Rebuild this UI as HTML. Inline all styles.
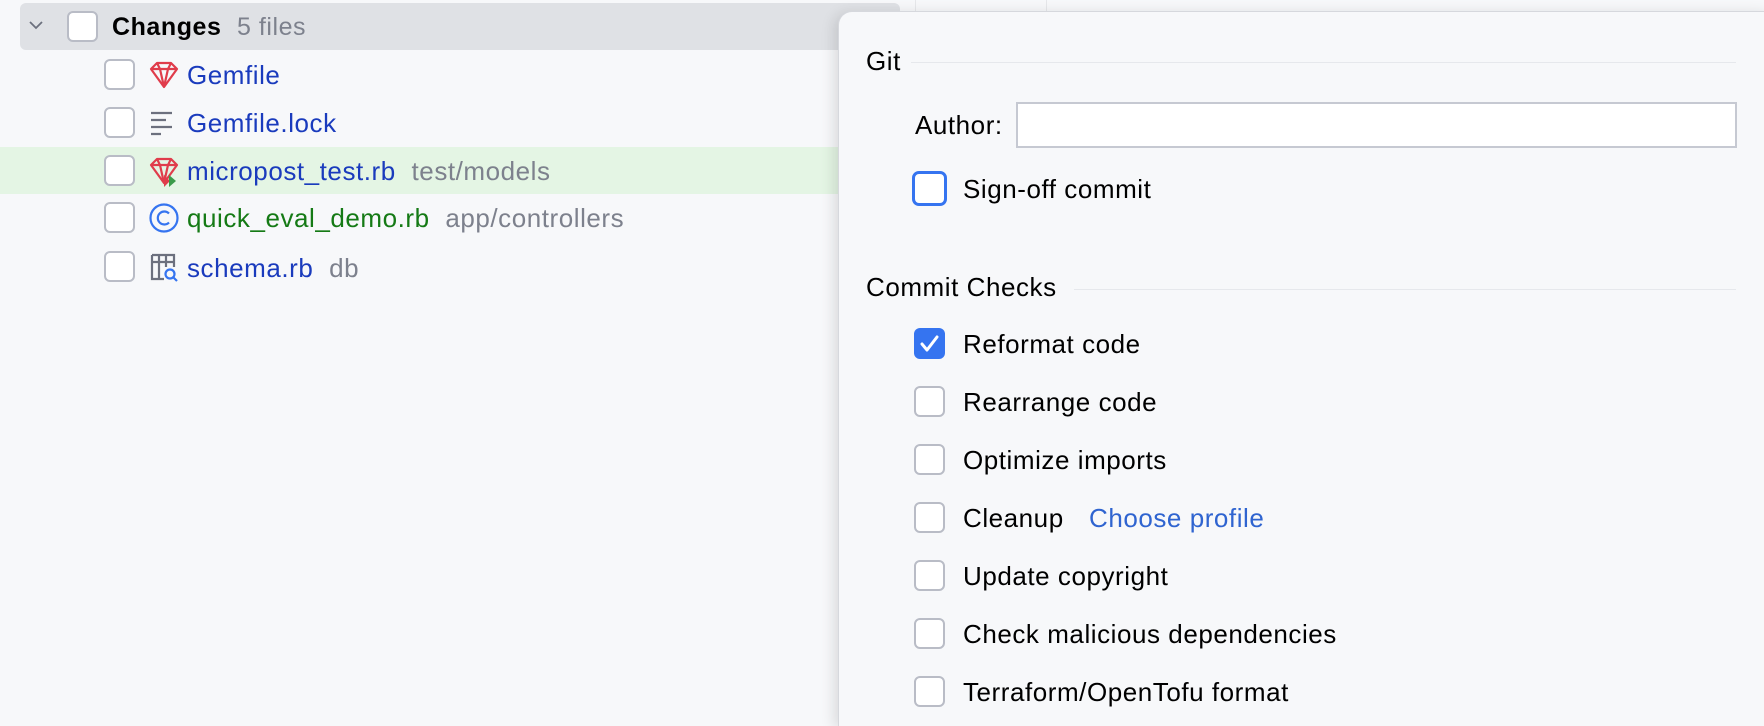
<!DOCTYPE html>
<html><head><meta charset="utf-8"><style>
*{margin:0;padding:0;box-sizing:border-box}
html,body{overflow:hidden;height:726px}
body{width:1764px;background:#f7f8fa;font-family:"Liberation Sans",sans-serif;font-size:26px;letter-spacing:0.55px;color:#000;position:relative}
.abs{position:absolute}
.cb{position:absolute;width:31px;height:31px;border:2px solid #b9bcc6;border-radius:6px;background:#fff}
.t{position:absolute;white-space:nowrap;line-height:30px}
.blue{color:#1a3bbd}.gray{color:#7d818d;margin-left:8px}.green{color:#157a15}
</style></head><body>
<div class="abs" style="left:915px;top:0;width:1px;height:14px;background:#e6e7ea"></div>
<div class="abs" style="left:1046px;top:0;width:1px;height:14px;background:#e6e7ea"></div>
<div class="abs" style="left:20px;top:3px;width:880px;height:47px;background:#dfe1e5;border-radius:6px"></div>
<svg class="abs" style="left:28px;top:18px" width="16" height="14"><path d="M2 4 L8 10 L14 4" fill="none" stroke="#6c707e" stroke-width="1.8"/></svg>
<div class="cb" style="left:67px;top:11px"></div>
<div class="t" style="left:112px;top:12px;font-weight:bold;font-size:25px">Changes <span class="gray" style="font-weight:normal">5 files</span></div>

<div class="cb" style="left:104px;top:59px"></div>
<svg class="abs" style="left:147px;top:60px" width="34" height="30"><path d="M4 9 L10 3 H24 L30 9 L17 27 Z M4 9 H30 M10 3 L13 9 L17 27 L21 9 L24 3" fill="none" stroke="#e03c4b" stroke-width="2.2" stroke-linejoin="round"/></svg>
<div class="t blue" style="left:187px;top:60px">Gemfile</div>

<div class="cb" style="left:104px;top:107px"></div>
<svg class="abs" style="left:150px;top:110px" width="26" height="26"><path d="M1 3H22M1 10H16M1 17H22M1 24H11" stroke="#6c707e" stroke-width="2.2"/></svg>
<div class="t blue" style="left:187px;top:108px">Gemfile.lock</div>

<div class="abs" style="left:0;top:147px;width:900px;height:47px;background:#e4f5e4"></div>
<div class="cb" style="left:104px;top:155px"></div>
<svg class="abs" style="left:147px;top:156px" width="34" height="32"><path d="M4 9 L10 3 H24 L30 9 L17 27 Z M4 9 H30 M10 3 L13 9 L17 27 L21 9 L24 3" fill="none" stroke="#e03c4b" stroke-width="2.2" stroke-linejoin="round"/><path d="M17 19 L17 31 L23 25 Z" fill="#e03c4b"/><path d="M22 19 L22 31 L29 25 Z" fill="#3a9b4a"/></svg>
<div class="t blue" style="left:187px;top:156px">micropost_test.rb <span class="gray">test/models</span></div>

<div class="cb" style="left:104px;top:202px"></div>
<svg class="abs" style="left:148px;top:202px" width="32" height="32"><circle cx="16" cy="16" r="13.5" fill="none" stroke="#3574f0" stroke-width="2.2"/><path d="M21 11.5 A6.5 6.5 0 1 0 21 20.5" fill="none" stroke="#3574f0" stroke-width="2.2"/></svg>
<div class="t green" style="left:187px;top:203px">quick_eval_demo.rb <span class="gray">app/controllers</span></div>

<div class="cb" style="left:104px;top:251px"></div>
<svg class="abs" style="left:150px;top:253px" width="32" height="30"><path d="M2 2H24V14M2 2V26H14M2 9H24M9 2V26M16 2V14" fill="none" stroke="#6c707e" stroke-width="2.2"/><circle cx="20" cy="21" r="4.5" fill="none" stroke="#3574f0" stroke-width="2.2"/><path d="M23 24L27 28" stroke="#3574f0" stroke-width="2.2"/></svg>
<div class="t blue" style="left:187px;top:253px">schema.rb <span class="gray">db</span></div>

<div class="abs" style="left:838px;top:11px;width:940px;height:715px;background:#f7f8fa;border:1px solid #d6d8dd;border-bottom:none;border-radius:14px 14px 0 0;box-shadow:-4px 2px 14px rgba(0,0,0,.12)"></div>
<div class="t" style="left:866px;top:46px">Git</div>
<div class="abs" style="left:911px;top:62px;width:825px;height:1px;background:#e6e8ec"></div>
<div class="t" style="left:915px;top:110px">Author:</div>
<div class="abs" style="left:1016px;top:102px;width:721px;height:46px;background:#fff;border:2px solid #c6c9d2"></div>
<div class="abs" style="left:912px;top:171px;width:35px;height:35px;border:3px solid #3574f0;border-radius:7px;background:#fff"></div>
<div class="t" style="left:963px;top:174px">Sign-off commit</div>
<div class="t" style="left:866px;top:272px">Commit Checks</div>
<div class="abs" style="left:1074px;top:289px;width:662px;height:1px;background:#e6e8ec"></div>

<div class="abs" style="left:914px;top:328px;width:31px;height:31px;background:#3574f0;border-radius:6px"></div>
<svg class="abs" style="left:914px;top:328px" width="31" height="31"><path d="M8 16 L13 22 L23 9" fill="none" stroke="#fff" stroke-width="3" stroke-linecap="round" stroke-linejoin="round"/></svg>
<div class="t" style="left:963px;top:329px">Reformat code</div>
<div class="cb" style="left:914px;top:386px"></div><div class="t" style="left:963px;top:387px">Rearrange code</div>
<div class="cb" style="left:914px;top:444px"></div><div class="t" style="left:963px;top:445px">Optimize imports</div>
<div class="cb" style="left:914px;top:502px"></div><div class="t" style="left:963px;top:503px">Cleanup</div><div class="t" style="left:1089px;top:503px;color:#2f64d0">Choose profile</div>
<div class="cb" style="left:914px;top:560px"></div><div class="t" style="left:963px;top:561px">Update copyright</div>
<div class="cb" style="left:914px;top:618px"></div><div class="t" style="left:963px;top:619px">Check malicious dependencies</div>
<div class="cb" style="left:914px;top:676px"></div><div class="t" style="left:963px;top:677px">Terraform/OpenTofu format</div>
</body></html>
